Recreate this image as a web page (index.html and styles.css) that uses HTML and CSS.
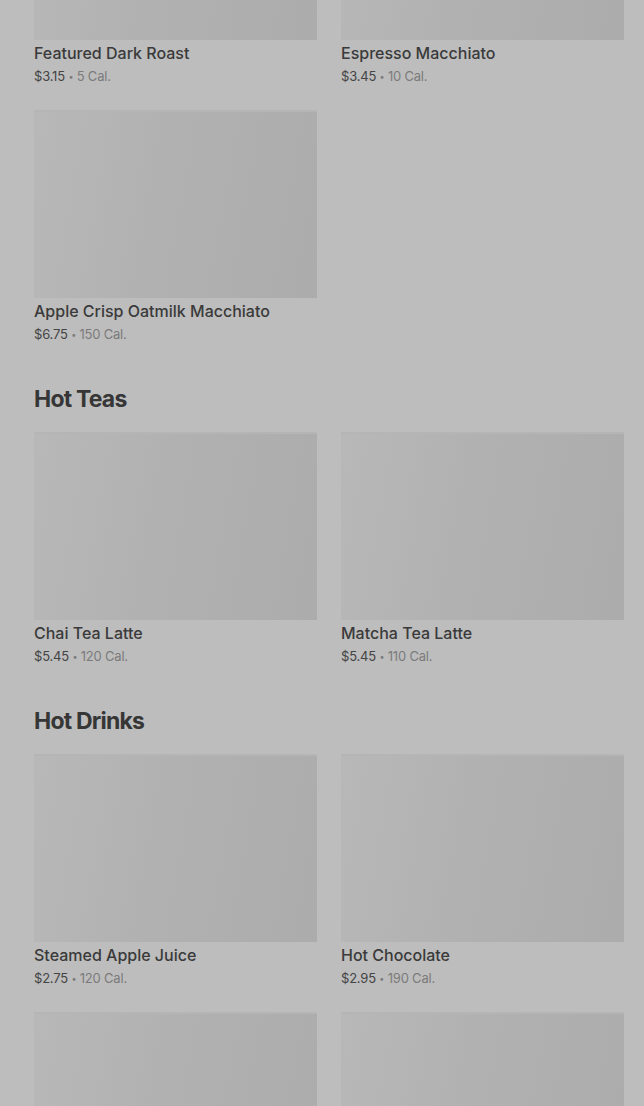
FILE: index.html
```html
<!DOCTYPE html>
<html lang="en">
<head>
	<meta charset="UTF-8">
	<title>Menu</title>
	<link rel="stylesheet" href="styles.css">
</head>
<body>
	<div class="page">
		<!-- hot coffees (scrolled past the top) -->
		<section class="menu first">
			<ul class="grid">
				<li class="card">
					<div class="pic"></div>
					<h3>Featured Dark Roast</h3>
					<p class="meta"><span class="price">$3.15</span> <span class="dot">•</span> 5 Cal.</p>
				</li>
				<li class="card">
					<div class="pic"></div>
					<h3>Espresso Macchiato</h3>
					<p class="meta"><span class="price">$3.45</span> <span class="dot">•</span> 10 Cal.</p>
				</li>
				<li class="card">
					<div class="pic"></div>
					<h3>Apple Crisp Oatmilk Macchiato</h3>
					<p class="meta"><span class="price">$6.75</span> <span class="dot">•</span> 150 Cal.</p>
				</li>
			</ul>
		</section>

		<section class="menu">
			<h2>Hot Teas</h2>
			<ul class="grid">
				<li class="card">
					<div class="pic"></div>
					<h3>Chai Tea Latte</h3>
					<p class="meta"><span class="price">$5.45</span> <span class="dot">•</span> 120 Cal.</p>
				</li>
				<li class="card">
					<div class="pic"></div>
					<h3>Matcha Tea Latte</h3>
					<p class="meta"><span class="price">$5.45</span> <span class="dot">•</span> 110 Cal.</p>
				</li>
			</ul>
		</section>

		<section class="menu">
			<h2>Hot Drinks</h2>
			<ul class="grid">
				<li class="card">
					<div class="pic"></div>
					<h3>Steamed Apple Juice</h3>
					<p class="meta"><span class="price">$2.75</span> <span class="dot">•</span> 120 Cal.</p>
				</li>
				<li class="card">
					<div class="pic"></div>
					<h3>Hot Chocolate</h3>
					<p class="meta"><span class="price">$2.95</span> <span class="dot">•</span> 190 Cal.</p>
				</li>
				<li class="card">
					<div class="pic"></div>
					<h3>&nbsp;</h3>
					<p class="meta">&nbsp;</p>
				</li>
				<li class="card">
					<div class="pic"></div>
					<h3>&nbsp;</h3>
					<p class="meta">&nbsp;</p>
				</li>
			</ul>
		</section>
	</div>
</body>
</html>
```

FILE: styles.css
```css
*{
	margin: 0;
	padding: 0;
	list-style: none;
	box-sizing: border-box;
}
html, body{
	height: 100%;
	overflow: hidden;
}
body{
	background: #bdbdbd;
	font-family: Inter, "Open Sans", sans-serif;
	color: #3a3a3a;
}
.page{
	padding: 0 20px 0 34px;
}
.first{
	margin-top: -148px;
}
.menu h2{
	margin-top: 39px;
	margin-bottom: 17px;
	font-size: 23px;
	line-height: 32px;
	font-weight: 700;
	letter-spacing: -0.8px;
	color: #363636;
}
.grid{
	display: grid;
	grid-template-columns: 1fr 1fr;
	column-gap: 24px;
	row-gap: 24px;
}
.card .pic{
	height: 188px;
	background: linear-gradient(100deg, #b8b8b8 0%, #b1b1b1 45%, #acacac 100%);
	border-top: 2px solid #b5b5b5;
}
.card h3{
	margin-top: 2px;
	font-size: 16px;
	line-height: 22px;
	font-weight: 500;
	color: #3a3a3a;
	white-space: nowrap;
}
.card .meta{
	margin-top: 2px;
	height: 20px;
	font-size: 13px;
	line-height: 20px;
	letter-spacing: -0.2px;
	color: #7b7b7b;
}
.card .price{
	color: #444;
}
.card .dot{
	font-size: 9px;
	line-height: 0;
	vertical-align: 1px;
}
```
